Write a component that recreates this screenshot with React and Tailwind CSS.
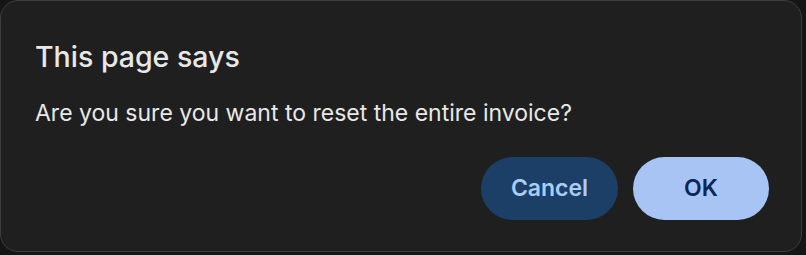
export default function App() {
  return (
    <div className="w-[806px] h-[255px] bg-[#151515] overflow-hidden" style={{ fontFamily: "Inter, 'Noto Sans', sans-serif" }}>
      <div className="w-[802px] h-[252px] rounded-[18px] border border-[#3d3d3d] bg-[#1f1f1f] flex flex-col pl-[34px] pr-[34px]">
        <h1 className="mt-[39px] text-[28.5px] leading-[34px] font-medium text-[#e8e8e8]">This page says</h1>
        <p className="mt-[25px] text-[23px] leading-[28px] text-[#e8e8e8]">Are you sure you want to reset the entire invoice?</p>
        <div className="mt-auto mb-[31px] flex justify-end gap-[15px] -mr-[2px]">
          <button className="w-[137px] h-[63px] rounded-full bg-[#1b3f66] text-[#a9cdf6] text-[23px] font-semibold">Cancel</button>
          <button className="w-[136px] h-[63px] rounded-full bg-[#a8c4f5] text-[#0f2457] text-[23px] font-semibold">OK</button>
        </div>
      </div>
    </div>
  );
}
